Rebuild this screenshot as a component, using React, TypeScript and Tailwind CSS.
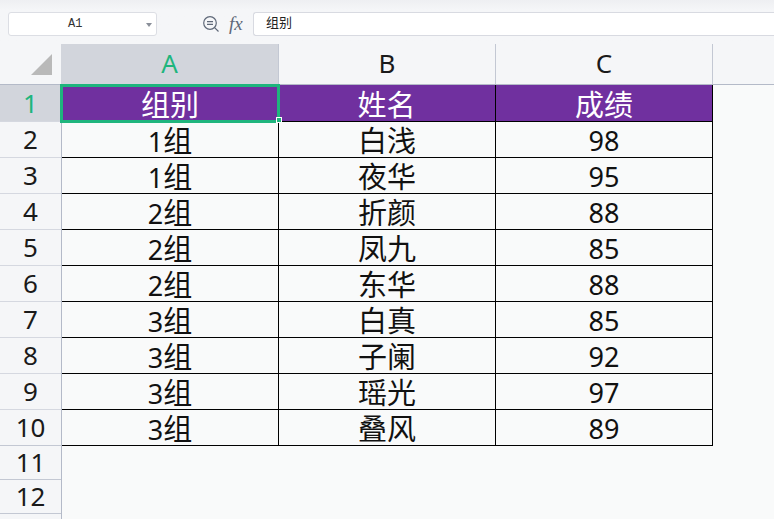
import React from 'react';

const rows = [
  ['1', '组', '白浅', '98'],
  ['1', '组', '夜华', '95'],
  ['2', '组', '折颜', '88'],
  ['2', '组', '凤九', '85'],
  ['2', '组', '东华', '88'],
  ['3', '组', '白真', '85'],
  ['3', '组', '子阑', '92'],
  ['3', '组', '瑶光', '97'],
  ['3', '组', '叠风', '89'],
];

const font = "font-['Noto_Sans','Noto_Sans_CJK_SC',sans-serif]";

const App: React.FC = () => {
  return (
    <div className={`w-[774px] h-[519px] overflow-hidden bg-[#f9fafa] ${font}`}>
      {/* formula bar */}
      <div className="h-[44px] bg-[#f5f6f8] bg-gradient-to-b from-[#eeeff2] to-[#f5f6f8] to-[10px] pt-[12px] pl-[8px] flex items-start">
        <div className="w-[149px] h-[24px] bg-white border border-[#dcdee4] rounded-[3px] flex items-center relative">
          <span className="pl-[59px] text-[12px] leading-none text-[#333] font-['Liberation_Mono',monospace]">A1</span>
          <span className="absolute right-[4px] top-[10px] w-0 h-0 border-x-[3.5px] border-x-transparent border-t-[4px] border-t-[#8a8f99]" />
        </div>
        <svg className="ml-[45px] mt-[3px]" width="18" height="18" viewBox="0 0 18 18" fill="none" stroke="#5f6878" strokeWidth="1.2">
          <circle cx="8" cy="8" r="6.3" />
          <path d="M5 6.6h6M5 9.4h6M12.6 12.6l3.9 3.9" />
        </svg>
        <span className="ml-[9px] mt-[1px] w-[17px] text-[19px] leading-[22px] italic text-[#5f6878] font-['Liberation_Serif',serif]">fx</span>
        <div className="ml-[7px] flex-1 h-[24px] bg-white border-y border-l border-[#d8dae1] rounded-l-[3px] pl-[12px] text-[13px] leading-[19px] text-[#222]">
          组别
        </div>
      </div>

      {/* column headers */}
      <div className="h-[41px] flex border-b border-[#b4bac8] bg-[#f5f6f8]">
        <div className="w-[61px] flex items-end justify-end pr-[9px] pb-[9px]">
          <div className="w-[21px] h-[21px] bg-[#b9b9b9] [clip-path:polygon(100%_0,100%_100%,0_100%)]" />
        </div>
        <div className="w-[217px] bg-[#d2d5dc] text-[#1fb57d] text-[26px] leading-[39px] text-center">A</div>
        {['B', 'C'].map((c) => (
          <div key={c} className="w-[217px] border-l border-[#c3c8d3] text-[#1a1a1a] text-[26px] leading-[39px] text-center">
            {c}
          </div>
        ))}
        <div className="w-[1px] bg-[#c3c8d3]" />
      </div>

      <div className="flex">
        {/* row headers */}
        <div className="w-[62px] shrink-0 bg-[#f5f6f8] border-r border-[#b4bac8]">
          {Array.from({ length: 13 }, (_, i) => (
            <div
              key={i}
              className={
                i === 0
                  ? 'h-[36px] pt-[1px] bg-[#d2d5dc] text-[#1fb57d] text-[26px] leading-[35px] text-center'
                  : i < 10
                    ? 'h-[36px] border-t border-[#d5d8e0] text-[#1a1a1a] text-[26px] leading-[35px] text-center'
                    : 'h-[34px] border-t border-[#c3c8d3] text-[#1a1a1a] text-[26px] leading-[33px] text-center'
              }
            >
              {i < 12 ? i + 1 : ''}
            </div>
          ))}
        </div>

        {/* sheet */}
        <div className="w-[651px]">
          <div className="relative h-[36px] pt-[4px] grid grid-cols-[216px_217px_218px] bg-[#70309f] text-white text-[29px] leading-[32px] text-center">
            <div>组别</div>
            <div>姓名</div>
            <div>成绩</div>
            <div className="absolute left-[216px] top-0 w-[1px] h-[36px] bg-black" />
            <div className="absolute left-[433px] top-0 w-[1px] h-[36px] bg-black" />
            <div className="absolute left-[650px] top-0 w-[1px] h-[36px] bg-black" />
            <div className="absolute left-[-2px] top-[-1px] w-[220px] h-[39px] border-[3px] border-[#1fb57d]" />
            <div className="absolute left-[214px] top-[32px] w-[6px] h-[6px] bg-[#1fb57d] border border-white" />
          </div>
          {rows.map((r, i) => (
            <div
              key={i}
              className="h-[36px] grid grid-cols-[216px_217px_218px] border-t border-black text-[#111] text-[29px] text-center last:h-[37px] last:border-b"
            >
              <div className="pt-[3px] leading-[32px]">
                <span className="text-[27px]">{r[0]}</span>
                {r[1]}
              </div>
              <div className="pt-[3px] leading-[32px] border-l border-black">{r[2]}</div>
              <div className="pt-[3px] leading-[32px] border-x border-black text-[27px]">{r[3]}</div>
            </div>
          ))}
        </div>
      </div>
    </div>
  );
};

export default App;
